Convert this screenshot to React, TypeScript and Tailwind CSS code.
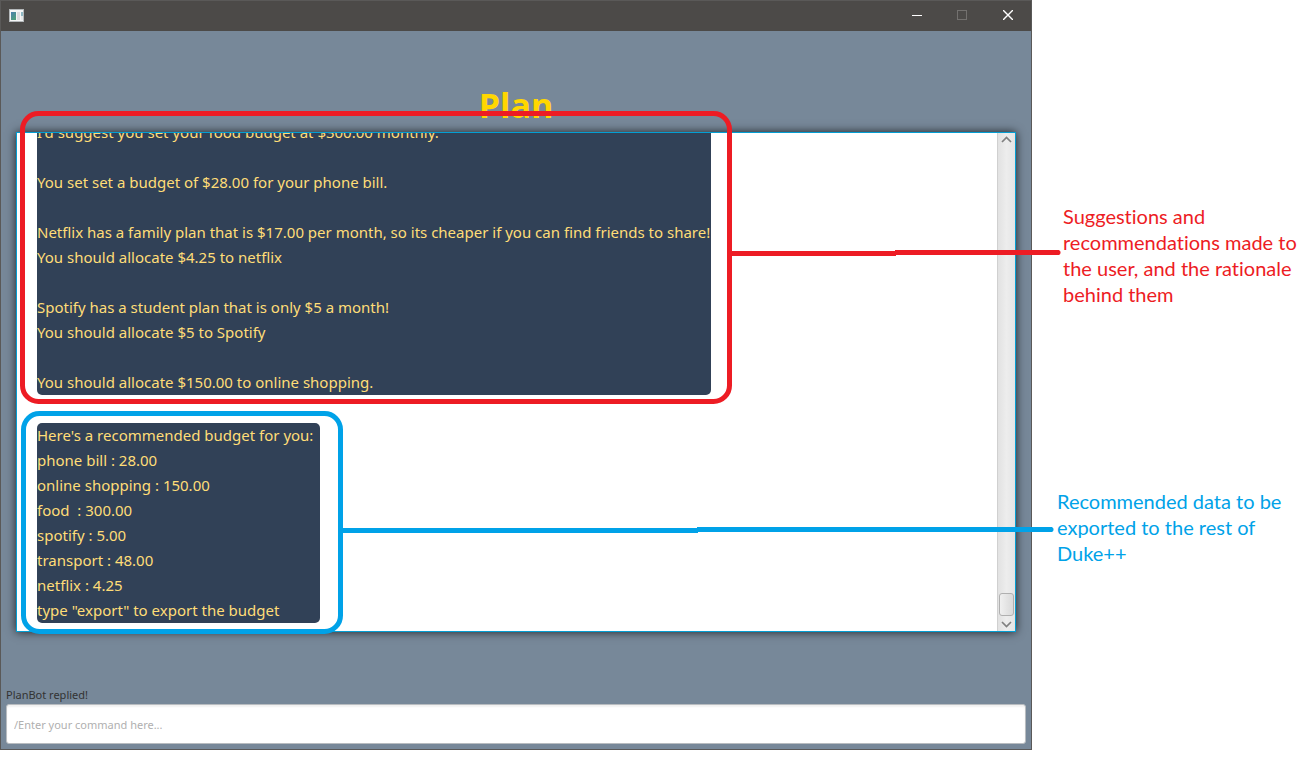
import React from "react";

const suggestions = [
  "I'd suggest you set your food budget at $300.00 monthly.",
  "",
  "You set set a budget of $28.00 for your phone bill.",
  "",
  "Netflix has a family plan that is $17.00 per month, so its cheaper if you can find friends to share!",
  "You should allocate $4.25 to netflix",
  "",
  "Spotify has a student plan that is only $5 a month!",
  "You should allocate $5 to Spotify",
  "",
  "You should allocate $150.00 to online shopping.",
];

const budget = [
  "Here's a recommended budget for you:",
  "phone bill : 28.00",
  "online shopping : 150.00",
  "food  : 300.00",
  "spotify : 5.00",
  "transport : 48.00",
  "netflix : 4.25",
  'type "export" to export the budget',
];

function AppIcon() {
  return (
    <svg width="16" height="14" viewBox="0 0 16 14" aria-hidden="true">
      <defs>
        <linearGradient id="pane" x1="0" y1="0" x2="0.6" y2="1">
          <stop offset="0" stopColor="#4a7fae" />
          <stop offset="1" stopColor="#4f9d7c" />
        </linearGradient>
      </defs>
      <rect x="1.500" y="1.500" width="14" height="12" fill="#f4f5f5" stroke="#b4b8ba" />
      <rect x="3" y="4" width="5" height="8" fill="url(#pane)" />
      <rect x="9" y="4" width="3" height="8" fill="#dcdcdf" />
      <rect x="13" y="4" width="2" height="4" fill="#8fb8c4" />
      <rect x="13" y="8" width="2" height="4" fill="#e6e8e8" />
    </svg>
  );
}

function TitleBar() {
  return (
    <header className="flex h-[30px] shrink-0 items-center justify-between bg-[#4c4a48] pb-0.5 pl-[7px]">
      <AppIcon />
      <div className="flex h-full">
        <button aria-label="Minimize" className="flex w-[45px] items-center justify-center">
          <svg width="10" height="10" viewBox="0 0 10 10">
            <path d="M0 5.500H10" stroke="#fff" />
          </svg>
        </button>
        <button aria-label="Maximize" disabled className="flex w-[46px] items-center justify-center">
          <svg width="10" height="10" viewBox="0 0 10 10">
            <rect x="0.5" y="0.5" width="9" height="9" fill="none" stroke="#73716f" />
          </svg>
        </button>
        <button aria-label="Close" className="flex w-[46px] items-center justify-center">
          <svg width="10" height="10" viewBox="0 0 10 10">
            <path d="M0 0L10 10M10 0L0 10" stroke="#fff" strokeWidth="1.4" />
          </svg>
        </button>
      </div>
    </header>
  );
}

function Bubble({ lines, className }: { lines: string[]; className: string }) {
  return (
    <p
      className={`shrink-0 self-start whitespace-pre rounded-[5px] bg-[#314157] text-[15px] leading-[25px] text-[#ffdd77] ${className}`}
    >
      {lines.join("\n")}
    </p>
  );
}

function ScrollBar() {
  return (
    <div className="flex w-[18px] shrink-0 flex-col items-center justify-between border-l border-[#d0d0d0] bg-linear-to-r from-[#e2e2e2] via-[#ededed] to-[#e4e4e4]">
      <button aria-label="Scroll up" className="flex h-[13px] items-center">
        <svg width="11" height="7" viewBox="0 0 11 7">
          <path d="M1 6L5.500 1.500L10 6" fill="none" stroke="#808080" strokeWidth="1.7" />
        </svg>
      </button>
      <div className="flex flex-col items-center">
        <div className="h-[23px] w-[15px] rounded-[3px] border border-[#b0b0b0] bg-linear-to-r from-[#f0f0f0] to-[#d9d9d9]" />
        <button aria-label="Scroll down" className="flex h-[15px] items-center pt-0.5">
          <svg width="11" height="7" viewBox="0 0 11 7">
            <path d="M1 1L5.500 5.500L10 1" fill="none" stroke="#808080" strokeWidth="1.7" />
          </svg>
        </button>
      </div>
    </div>
  );
}

function Callouts() {
  return (
    <svg
      className="pointer-events-none absolute top-0 left-0"
      width="1313"
      height="774"
      viewBox="0 0 1313 774"
      fill="none"
      strokeWidth="5"
      aria-hidden="true"
    >
      <g stroke="#ed1c24">
        <rect x="22.500" y="113.500" width="707" height="288" rx="16" />
        <path d="M732 253.500H896M895 252.500H1059" />
        <path d="M1058 252.500h0.010" strokeLinecap="round" />
      </g>
      <g stroke="#00a2e8">
        <rect x="23.500" y="413.500" width="317" height="218" rx="16" />
        <path d="M343 530.500H698M697 529.500H1052" />
        <path d="M1051 529.500h0.010" strokeLinecap="round" />
      </g>
    </svg>
  );
}

export default function App() {
  return (
    <div className="relative flex h-screen overflow-hidden bg-white pb-6 font-['Noto_Sans','Open_Sans',sans-serif]">
      <div className="flex min-w-0 flex-1 flex-col border border-[#5a5958] bg-[#778899]">
        <TitleBar />
        <main className="flex min-h-0 flex-1 flex-col">
          <h1 className="mt-[50px] mb-[3px] text-center font-['Open_Sans','Noto_Sans',sans-serif] text-[34px] leading-[48px] font-bold text-[#ffd700]">
            Plan
          </h1>
          <section
            aria-label="Conversation"
            className="mx-[15px] flex min-h-0 flex-1 overflow-hidden border border-[#039ed3] bg-white shadow-[0_0_9px_0_rgba(0,0,0,0.75)]"
          >
            <div className="flex min-w-0 flex-1 flex-col justify-end gap-7 overflow-hidden pb-2 pl-5">
              <Bubble lines={suggestions} className="pr-px" />
              <Bubble lines={budget} className="pr-[7px]" />
            </div>
            <ScrollBar />
          </section>
          <form className="mt-[54px] flex flex-col px-[5px] pb-[5px]" onSubmit={(e) => e.preventDefault()}>
            <label htmlFor="command" className="text-[11px] leading-[18px] text-[#333333]">
              PlanBot replied!
            </label>
            <input
              id="command"
              type="text"
              placeholder="/Enter your command here..."
              className="h-10 w-full rounded-[3px] border border-[#b8bcc0] bg-white px-[7px] text-[11px] shadow-[inset_0_2px_2px_rgba(0,0,0,0.06)] outline-none placeholder:text-[#b0b0b0]"
            />
          </form>
        </main>
      </div>
      <aside className="flex w-[281px] shrink-0 flex-col pt-[203px] font-['Lato','Open_Sans',sans-serif] text-[20px] leading-[26px] [font-variant-ligatures:none]">
        <p className="pl-[31px] text-[#ed1c24]">
          Suggestions and
          <br />
          recommendations made to
          <br />
          the user, and the rationale
          <br />
          behind them
        </p>
        <p className="mt-[181px] pl-[25px] text-[#00a2e8]">
          Recommended data to be
          <br />
          exported to the rest of
          <br />
          Duke++
        </p>
      </aside>
      <Callouts />
    </div>
  );
}
